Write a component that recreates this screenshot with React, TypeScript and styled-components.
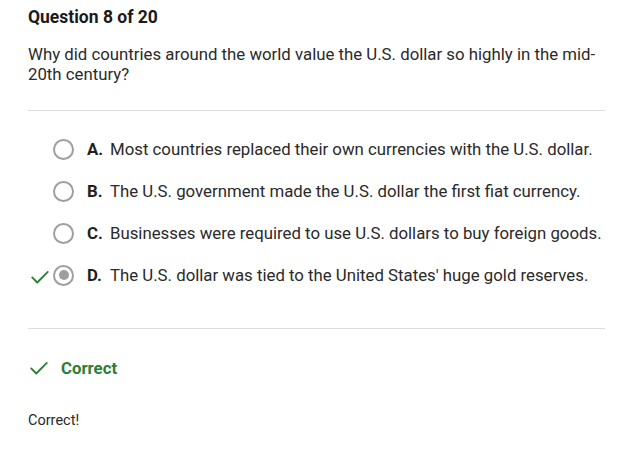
import styled, { createGlobalStyle } from 'styled-components';

const GlobalStyle = createGlobalStyle`
  body {
    margin: 0;
    background: #ffffff;
    font-family: Roboto, "Liberation Sans", Arial, sans-serif;
    color: #262626;
  }
`;

const options = [
  { letter: 'A.', text: 'Most countries replaced their own currencies with the U.S. dollar.' },
  { letter: 'B.', text: 'The U.S. government made the U.S. dollar the first fiat currency.' },
  { letter: 'C.', text: 'Businesses were required to use U.S. dollars to buy foreign goods.' },
  { letter: 'D.', text: "The U.S. dollar was tied to the United States' huge gold reserves.", selected: true },
];

const Check = ({ size = 20 }: { size?: number }) => (
  <svg width={size} height={size} viewBox="0 0 24 24" fill="none">
    <path d="M3.5 12.5l5.5 5.5L20.5 6.5" stroke="#2e7d32" strokeWidth="2" strokeLinecap="round" strokeLinejoin="round" />
  </svg>
);

const App = () => {
  return (
    <>
      <GlobalStyle />
      <Page>
        <Title>Question 8 of 20</Title>
        <Prompt>Why did countries around the world value the U.S. dollar so highly in the mid-20th century?</Prompt>
        <Divider />
        <OptionList>
          {options.map((o) => (
            <OptionRow key={o.letter}>
              <Mark>{o.selected && <Check size={22} />}</Mark>
              <Radio selected={!!o.selected} />
              <Letter>{o.letter}</Letter>
              <OptionText>{o.text}</OptionText>
            </OptionRow>
          ))}
        </OptionList>
        <Divider />
        <Result>
          <Check size={22} />
          <ResultLabel>Correct</ResultLabel>
        </Result>
        <Feedback>Correct!</Feedback>
      </Page>
    </>
  );
};

const Page = styled.div`
  padding: 7px 18px 0 28px;
`;
const Title = styled.div`
  font-size: 17.5px;
  font-weight: 700;
  line-height: 20px;
  color: #1a1a1a;
`;
const Prompt = styled.div`
  margin-top: 17px;
  font-size: 16.8px;
  line-height: 20px;
  color: #2a2a2a;
  width: 577px;
`;
const Divider = styled.div`
  height: 1px;
  background: #dcdcdc;
  margin: 26px 0 0;
  width: 577px;
`;
const OptionList = styled.div`
  display: flex;
  flex-direction: column;
  gap: 20px;
  padding-top: 27px;
  padding-bottom: 16px;
`;
const OptionRow = styled.div`
  display: flex;
  align-items: center;
  height: 22px;
  margin-left: -28px;
`;
const Mark = styled.div`
  width: 29px;
  padding-left: 29px;
  display: flex;
  align-items: center;
  margin-top: 4px;
`;
const Radio = styled.div<{ selected: boolean }>`
  box-sizing: border-box;
  width: 21px;
  height: 21px;
  border-radius: 50%;
  border: 2px solid #9e9e9e;
  margin-left: -5px;
  display: flex;
  align-items: center;
  justify-content: center;
  &::after {
    content: '';
    display: ${({ selected }) => (selected ? 'block' : 'none')};
    width: 10px;
    height: 10px;
    border-radius: 50%;
    background: #9e9e9e;
  }
`;
const Letter = styled.span`
  margin-left: 13px;
  font-size: 16.8px;
  font-weight: 700;
  width: 23px;
  color: #1f1f1f;
`;
const OptionText = styled.span`
  font-size: 16.8px;
  color: #2a2a2a;
`;
const Result = styled.div`
  display: flex;
  align-items: center;
  gap: 11px;
  margin-top: 28px;
  height: 22px;
`;
const ResultLabel = styled.span`
  font-size: 16.8px;
  font-weight: 700;
  color: #2e7d32;
`;
const Feedback = styled.div`
  margin-top: 33px;
  font-size: 14.5px;
  color: #2a2a2a;
`;

export default App;
